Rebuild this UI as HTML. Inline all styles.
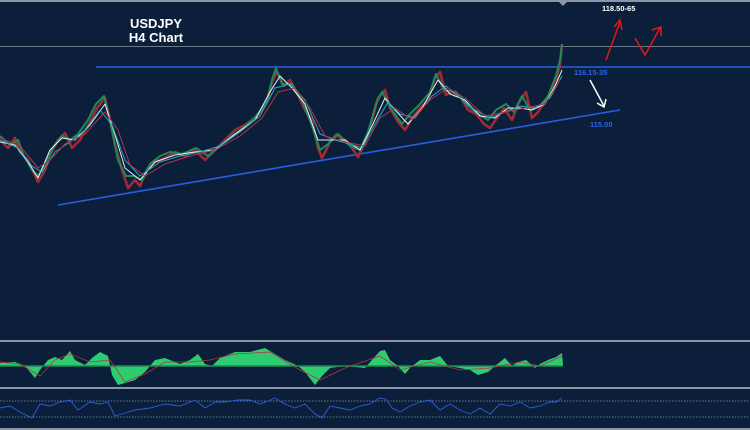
<!DOCTYPE html>
<html><head><meta charset="utf-8"><style>
html,body{margin:0;padding:0;background:#0b1f3b;width:750px;height:430px;overflow:hidden}
svg{display:block}
</style></head><body>
<svg width="750" height="430" viewBox="0 0 750 430" xmlns="http://www.w3.org/2000/svg">
<rect width="750" height="430" fill="#0b1f3b"/>
<line x1="0" y1="1" x2="750" y2="1" fill="none" stroke="#8a96a6" stroke-width="2"/>
<path d="M558 1 l5 5 l5 -5z" fill="#8a96a6"/>
<line x1="0" y1="46.5" x2="750" y2="46.5" stroke="#6b7888" stroke-width="1"/>
<line x1="96" y1="67" x2="750" y2="67" stroke="#1f4fb8" stroke-width="2"/>
<line x1="58" y1="205" x2="620" y2="110" stroke="#2a5de0" stroke-width="1.6"/>
<text x="156" y="28" fill="#fff" font-family="Liberation Sans,sans-serif" font-weight="bold" font-size="13" text-anchor="middle">USDJPY</text>
<text x="156" y="42" fill="#fff" font-family="Liberation Sans,sans-serif" font-weight="bold" font-size="13" text-anchor="middle">H4 Chart</text>
<text x="602" y="11" fill="#fff" font-family="Liberation Sans,sans-serif" font-weight="bold" font-size="7.5">118.50-65</text>
<text x="574" y="75" fill="#2a64e8" font-family="Liberation Sans,sans-serif" font-weight="bold" font-size="7.5">116.15-35</text>
<text x="590" y="127" fill="#2a64e8" font-family="Liberation Sans,sans-serif" font-weight="bold" font-size="7.5">115.00</text>
<g fill="none" stroke-width="1.5">
<path d="M606 60 L620 22 M614 27 L620 20 L622 30" stroke="#e01818"/>
<path d="M635 38 L645 55 L660 28 M652 30 L661 27 L661 36" stroke="#e01818"/>
<path d="M590 80 L604 106 M597 103 L604 107 L606 99" stroke="#fff"/>
</g>
<g fill="none" stroke-linejoin="round">
<polyline stroke="#9e2a36" stroke-width="2.6" points="0,140 8,148 15,138 20,152 28,160 38,182 45,170 50,155 58,140 65,133 72,148 80,140 90,122 97,108 105,98 110,120 115,145 122,170 128,188 135,180 140,186 148,168 155,162 165,158 175,152 185,156 195,150 205,160 215,150 225,140 235,130 245,125 255,118 262,110 268,100 272,82 277,72 284,86 290,80 298,95 305,110 312,120 318,148 322,158 330,142 336,135 345,140 352,148 358,157 366,140 372,120 378,98 385,90 390,108 398,122 405,130 412,118 420,108 428,100 435,78 440,72 446,95 452,92 460,96 468,110 476,114 484,124 490,128 497,118 504,108 512,120 518,104 526,92 532,118 538,112 546,100 552,92 556,80 560,65 562,45"/>
<polyline stroke="#1f8a55" stroke-width="2" points="0,136 10,145 18,140 24,156 32,170 38,176 46,162 54,146 62,136 70,140 78,134 88,120 96,104 104,96 112,130 118,160 126,176 134,176 142,180 150,164 160,156 170,152 182,154 196,148 208,156 220,146 232,136 244,128 256,116 266,104 272,80 276,68 282,84 292,84 302,100 312,126 320,150 328,144 338,134 350,146 360,150 368,132 376,104 382,92 392,110 402,124 410,114 420,104 430,92 436,74 444,90 456,92 466,104 478,114 488,120 496,110 506,104 514,112 522,96 530,110 540,106 548,96 556,76 560,60 562,44"/>
<polyline stroke="#e8eef5" stroke-width="1" points="0,142 15,145 28,162 38,178 50,150 62,138 75,140 90,125 105,104 115,135 125,168 140,180 155,162 175,155 195,152 215,150 235,134 255,120 270,92 280,76 292,88 305,104 318,140 330,140 345,140 360,150 372,126 385,98 395,110 408,124 422,108 438,80 450,94 465,100 480,116 495,118 508,108 520,108 532,110 545,104 556,84 562,70"/>
<polyline stroke="#2aa8c8" stroke-width="1" points="0,140 18,148 32,166 42,172 55,152 70,142 85,130 100,110 112,125 125,160 140,176 160,162 180,156 200,152 220,146 240,132 260,116 275,88 290,84 305,100 320,134 335,140 350,144 362,148 375,124 388,102 400,114 415,118 432,96 446,86 460,98 475,110 490,118 505,112 520,106 535,108 550,98 562,76"/>
<polyline stroke="#b2343f" stroke-width="1" points="0,138 20,146 38,168 50,160 65,144 85,134 105,112 118,130 130,165 145,176 165,164 190,156 215,150 240,136 262,118 278,92 295,88 310,108 325,136 345,142 365,146 380,118 395,108 412,120 430,100 448,88 465,98 485,116 505,112 525,108 545,104 560,80"/>
</g>
<line x1="0" y1="341" x2="750" y2="341" stroke="#8a96a6" stroke-width="2"/>
<line x1="0" y1="388" x2="750" y2="388" stroke="#8a96a6" stroke-width="2"/>
<line x1="0" y1="429" x2="750" y2="429" stroke="#8a96a6" stroke-width="2"/>
<path fill="#2ecc71" d="M0 366 L0 363 L15 362 L25 366 L35 378 L40 370 L48 360 L55 357 L62 360 L70 351 L75 360 L85 365 L92 358 L100 352 L108 356 L112 375 L118 385 L125 383 L135 380 L145 372 L150 366 L155 360 L165 358 L180 364 L190 360 L198 354 L205 364 L212 366 L220 358 L235 352 L250 352 L265 348 L275 354 L285 360 L298 366 L305 372 L315 385 L322 376 L330 368 L345 366 L365 368 L372 360 L380 351 L385 350 L390 360 L398 366 L405 374 L410 368 L420 360 L430 360 L440 356 L448 366 L460 368 L470 370 L478 375 L488 372 L495 366 L505 358 L512 366 L518 362 L526 360 L535 368 L540 364 L548 360 L556 357 L562 353 L563 366 Z"/>
<line x1="0" y1="366" x2="563" y2="366" stroke="#1f8a55" stroke-width="1.5"/>
<polyline fill="none" stroke="#b2343f" stroke-width="0.8" points="0,362 20,364 40,376 55,360 70,354 90,362 110,360 125,382 145,374 165,362 190,362 210,360 235,354 270,352 300,370 320,380 345,368 380,356 400,370 430,362 460,370 490,368 520,362 540,366 562,356"/>
<line x1="0" y1="401" x2="750" y2="401" stroke="#8a96a6" stroke-width="0.7" stroke-dasharray="1.5,1.5"/>
<line x1="0" y1="417" x2="750" y2="417" stroke="#8a96a6" stroke-width="0.7" stroke-dasharray="1.5,1.5"/>
<polyline fill="none" stroke="#2a5de0" stroke-width="0.9" points="0,408 10,406 20,412 32,418 40,404 50,406 60,402 70,400 78,410 90,402 100,404 108,402 115,416 125,413 135,410 150,408 165,404 180,406 195,400 205,408 215,402 225,402 238,400 250,400 260,404 268,401 275,398 285,404 295,408 305,404 315,414 322,418 330,406 340,408 350,410 360,406 370,404 380,398 386,399 392,408 400,412 410,406 420,402 430,400 440,410 450,404 460,410 470,414 480,408 490,414 500,404 510,406 520,402 530,408 540,406 550,402 556,402 562,398"/>
</svg>
</body></html>
